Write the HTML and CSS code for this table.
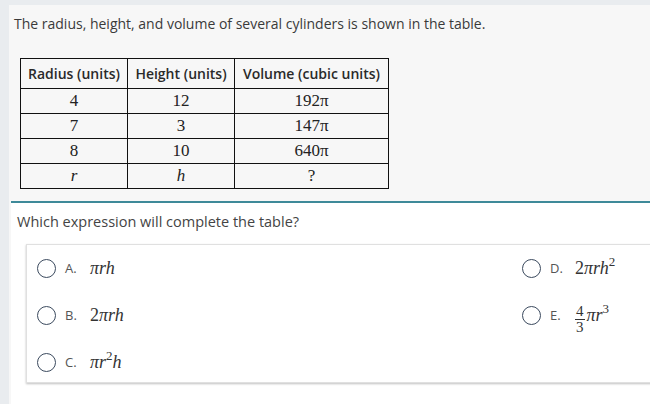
FILE: index.html
```html
<!DOCTYPE html>
<html>
<head>
<meta charset="utf-8">
<link rel="stylesheet" href="styles.css">
</head>
<body>
<div class="panel">
  <div class="stem">
    <p class="stem-text">The radius, height, and volume of several cylinders is shown in the table.</p>
    <table class="data">
      <thead>
        <tr><th class="c1">Radius (units)</th><th class="c2">Height (units)</th><th class="c3">Volume (cubic units)</th></tr>
      </thead>
      <tbody>
        <tr><td>4</td><td>12</td><td>192<span class="pi">π</span></td></tr>
        <tr><td>7</td><td>3</td><td>147<span class="pi">π</span></td></tr>
        <tr><td>8</td><td>10</td><td>640<span class="pi">π</span></td></tr>
        <tr><td><i>r</i></td><td><i>h</i></td><td>?</td></tr>
      </tbody>
    </table>
  </div>
  <div class="response">
    <p class="question">Which expression will complete the table?</p>
    <div class="choices">
      <div class="col left">
        <div class="opt"><span class="radio"></span><span class="lbl">A.</span><span class="math">πrh</span></div>
        <div class="opt"><span class="radio"></span><span class="lbl">B.</span><span class="math"><span class="up">2</span>πrh</span></div>
        <div class="opt"><span class="radio"></span><span class="lbl">C.</span><span class="math">πr<sup>2</sup>h</span></div>
      </div>
      <div class="col right">
        <div class="opt"><span class="radio"></span><span class="lbl">D.</span><span class="math"><span class="up">2</span>πrh<sup>2</sup></span></div>
        <div class="opt"><span class="radio"></span><span class="lbl">E.</span><span class="frac"><span class="num">4</span><span class="den">3</span></span><span class="math">πr<sup>3</sup></span></div>
      </div>
    </div>
  </div>
</div>
</body>
</html>
```
FILE: styles.css
```css
* { box-sizing: border-box; }
html, body { margin: 0; padding: 0; }
body {
  background: #e9ecef;
  font-family: "Open Sans", "Liberation Sans", sans-serif;
  color: #333;
  height: 404px;
  overflow: hidden;
}
.panel {
  margin: 5px 0 0 9px;
  background: #f7f7f7;
  height: 399px;
  display: flex;
  flex-direction: column;
}
.stem {
  padding: 9px 0 12px 5px;
}
.stem-text {
  margin: 0;
  font-size: 14px;
  line-height: 20px;
  color: #3a3a3a;
}
.data {
  margin: 24px 0 0 6px;
  border-collapse: collapse;
  font-family: "Liberation Serif", serif;
  font-size: 17px;
  color: #222;
}
.data th, .data td {
  border: 1px solid #111;
  text-align: center;
  padding: 0;
}
.data th {
  font-family: "Open Sans", "Liberation Sans", sans-serif;
  font-weight: 600;
  font-size: 14px;
  height: 30px;
  color: #2a2a2a;
  white-space: nowrap;
}
.data td { height: 25px; line-height: 20px; }
.c1 { width: 107px; }
.c2 { width: 107px; }
.c3 { width: 154px; }
.pi { font-style: normal; }
.response {
  flex: 1;
  margin-left: 2px;
  background: #fff;
  border-top: 2px solid #3e8a99;
}
.question {
  margin: 0;
  padding: 9px 0 0 6px;
  font-size: 14.5px;
  line-height: 20px;
  color: #444;
}
.choices {
  margin: 12px -10px 0 15px;
  border: 1px solid #e0e0e0;
  box-shadow: 0 1px 2px rgba(0,0,0,0.25);
  background: #fff;
  display: grid;
  grid-template-columns: 495px 1fr;
  padding: 13px 0 10px;
}
.col {
  display: flex;
  flex-direction: column;
  gap: 27px;
}
.opt {
  height: 20px;
  display: flex;
  align-items: center;
}
.left .opt { padding-left: 10px; }
.right .opt { padding-left: 0; }
.radio {
  width: 19px;
  height: 19px;
  border: 1.5px solid #3b4a5e;
  border-radius: 50%;
  flex: none;
}
.lbl {
  font-size: 13px;
  color: #555;
  margin-left: 9px;
  width: 25px;
}
.math {
  font-family: "Liberation Serif", serif;
  font-style: italic;
  font-size: 18px;
  color: #333;
  white-space: nowrap;
}
.up { font-style: normal; }
.math sup {
  font-style: normal;
  font-size: 13px;
  vertical-align: 8px;
  line-height: 0;
}
.frac {
  display: flex;
  flex-direction: column;
  align-items: center;
  font-family: "Liberation Serif", serif;
  font-size: 15px;
  line-height: 13px;
  color: #333;
  margin: 8px 2px 0 0;
  flex: none;
}
.frac .num { border-bottom: 1px solid #333; padding: 0 1px 1px; }
.frac .den { padding-top: 1px; }
```
